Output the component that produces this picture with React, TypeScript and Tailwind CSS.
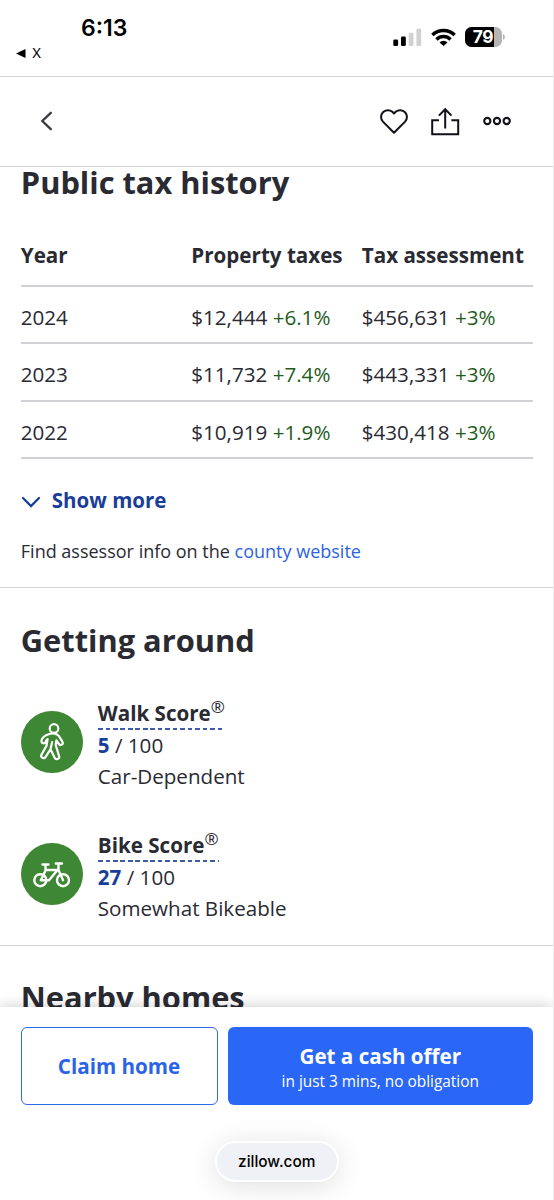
import React from "react";

const HISTORY = [
  { year: "2024", tax: "$12,444", taxUp: "+6.1%", value: "$456,631", valueUp: "+3%" },
  { year: "2023", tax: "$11,732", taxUp: "+7.4%", value: "$443,331", valueUp: "+3%" },
  { year: "2022", tax: "$10,919", taxUp: "+1.9%", value: "$430,418", valueUp: "+3%" },
];

function StatusBar() {
  return (
    <div className="flex h-[76px] shrink-0 justify-between pl-4 pr-[48px] font-['Inter',sans-serif] text-black">
      <div>
        <div className="mt-[13px] pl-[65px] text-[23px] font-semibold leading-[30px]">6:13</div>
        <div className="mt-[2px] flex items-center gap-[6px] text-[13.5px] leading-4">
          <svg width="10" height="9" viewBox="0 0 10 9"><path d="M0 4.5 9.5 0v9z" /></svg>
          <span>X</span>
        </div>
      </div>
      <div className="mt-[27px] flex h-5 items-center">
        <svg width="29" height="18" viewBox="0 0 29 18">
          <rect x="0.3" y="11.5" width="4.8" height="6.5" rx="1.3" />
          <rect x="8" y="8.5" width="4.8" height="9.5" rx="1.3" />
          <rect x="15.7" y="4.7" width="4.8" height="13.3" rx="1.3" fill="#d1d1d1" />
          <rect x="23.4" y="0.8" width="4.8" height="17.2" rx="1.3" fill="#d1d1d1" />
        </svg>
        <svg className="ml-[9px]" width="25" height="18" viewBox="0 0 25 18">
          <g fill="none" stroke="#000" strokeWidth="3.5">
            <path d="M1.4 7a15.7 15.7 0 0 1 22.2 0" />
            <path d="M5.5 11.5a9.9 9.9 0 0 1 14 0" />
          </g>
          <path d="M12.5 18 8.5 14.5a5.7 5.7 0 0 1 8 0z" />
        </svg>
        <div className="ml-[9px] flex h-5 w-[37px] items-center overflow-hidden rounded-[6.5px] bg-[#b5b5b5]">
          <div className="flex h-full w-[29px] items-center justify-end bg-black pr-px text-[17.5px] font-bold tracking-[-0.5px] text-white">79</div>
        </div>
        <svg className="ml-[1px]" width="2" height="6" viewBox="0 0 2 6"><path d="M0 0q2 1 2 3t-2 3z" fill="#b5b5b5" /></svg>
      </div>
    </div>
  );
}

function Header() {
  return (
    <header className="relative z-10 flex h-[91px] shrink-0 items-center border-y-[1.5px] border-[#d1d1d5] bg-white pb-px pl-10 pr-[42px]">
      <svg width="13" height="20" viewBox="0 0 13 20" fill="none" stroke="#3b3b42" strokeWidth="2.3" strokeLinecap="round"><path d="M10.8 1.8 2.3 10l8.5 8.2" /></svg>
      <svg className="ml-auto" width="28" height="26" viewBox="0 0 28 26" fill="none" stroke="#11111a" strokeWidth="2" strokeLinejoin="round">
        <path d="M14 24.7 2.9 13.6A6.8 6.8 0 0 1 12.3 3.8L14 5.5l1.7-1.7a6.8 6.8 0 0 1 9.4 9.8z" />
      </svg>
      <svg className="ml-[22px]" width="30" height="29" viewBox="0 0 30 29" fill="none" stroke="#11111a" strokeWidth="2">
        <path d="M9 13.3H2.2v14h26v-14h-6.8M15.2 21.5V2.2M8.9 8.6l6.3-6.4 6.3 6.4" />
      </svg>
      <svg className="ml-[23px]" width="28" height="10" viewBox="0 0 28 10" fill="none" stroke="#11111a" strokeWidth="2.1">
        <circle cx="4.3" cy="5" r="3.1" /><circle cx="14" cy="5" r="3.1" /><circle cx="23.7" cy="5" r="3.1" />
      </svg>
    </header>
  );
}

function WalkIcon() {
  return (
    <svg width="62" height="62" viewBox="0 0 62 62" fill="none" stroke="#fff" strokeWidth="2.2" strokeLinecap="round" strokeLinejoin="round">
      <circle cx="33" cy="17.5" r="4.3" />
      <path d="M27.5 23.3c-3.4 1.2-6.3 3.3-7 6.3-.6 2.8 3.3 3.8 4.1 1.1.3-1.3.9-1.9 2-2.6l-1.1 6.700-5 8.800c-1.500 2.900 2.500 5 4.200 2.300l4.800-7.800 4 8.400c1.400 3.100 5.600 1.500 4.500-1.600l-3.300-10.900.7-4.600 2.500 3.600c1.600 2.300 4.900.3 3.500-2.300l-3.500-5.500c-2-2.800-6.600-3.400-10.400-1.900zM29.500 38l1.700-7" />
    </svg>
  );
}

function BikeIcon() {
  return (
    <svg width="62" height="62" viewBox="0 0 62 62" fill="none" stroke="#fff" strokeWidth="2.4" strokeLinecap="round" strokeLinejoin="round">
      <circle cx="19.3" cy="37.2" r="6" /><circle cx="42" cy="37.2" r="6" />
      <path d="M21.5 21.5h6M24.5 21.5v6L19.800 37.200h8.200L36.500 27H24.500M34.800 20.500h6.200M37.500 20.500V27L42 37.200" />
    </svg>
  );
}

function Score({ icon, name, score, label }: { icon: React.ReactNode; name: string; score: string; label: string }) {
  return (
    <div className="flex h-[132px] items-start gap-[15px]">
      <div className="mt-[13px] size-[62px] shrink-0 rounded-full bg-[#3e8735]">{icon}</div>
      <div className="text-[20.6px] leading-[31px]">
        <div className="w-fit">
          <div className="flex h-[30px] font-bold">
            <span>{name}</span>
            <span className="-mt-[7px] text-[17px] font-normal">®</span>
          </div>
          <div className="h-[2px] bg-[repeating-linear-gradient(90deg,#3f5ba6_0_4.5px,transparent_4.5px_7.5px)]" />
        </div>
        <div><b className="text-[#1a3e98]">{score}</b> / 100</div>
        <div>{label}</div>
      </div>
    </div>
  );
}

export default function App() {
  return (
    <div className="flex h-[1200px] w-[554px] flex-col overflow-hidden border-r border-[#eeeeef] bg-white font-['Open_Sans',sans-serif] text-[#2a2a33]">
      <StatusBar />
      <Header />
      <main className="-mt-[6px] h-[846px] shrink-0 overflow-hidden">
        <section className="h-[426px] pl-[20.8px] pr-[20px]">
          <h2 className="text-[30.8px] font-bold leading-[42px]">Public tax history</h2>
          <div className="mt-[21px] grid h-[63px] grid-cols-[170.5px_170.5px_1fr] items-center border-b-2 border-[#d1d1d5] pt-[2px] text-[20.6px] font-bold">
            <div>Year</div>
            <div className="whitespace-nowrap">Property taxes</div>
            <div className="whitespace-nowrap">Tax assessment</div>
          </div>
          {HISTORY.map((r) => (
            <div key={r.year} className="grid h-[57.4px] grid-cols-[170.5px_170.5px_1fr] items-center border-b-2 border-[#d1d1d5] pt-[5.5px] text-[20.6px]">
              <div>{r.year}</div>
              <div className="whitespace-nowrap">{r.tax} <span className="text-[#1f5c1c]">{r.taxUp}</span></div>
              <div className="whitespace-nowrap">{r.value} <span className="text-[#1f5c1c]">{r.valueUp}</span></div>
            </div>
          ))}
          <div className="mt-[25px] flex items-center text-[20.5px] font-bold leading-[32px] text-[#1a3e98]">
            <svg className="mr-[11px] mt-[4px]" width="20" height="12" viewBox="0 0 20 12" fill="none" stroke="#1a3e98" strokeWidth="2.3" strokeLinecap="round"><path d="M2 2l8 8 8-8" /></svg>
            Show more
          </div>
          <p className="mt-[21px] text-[18px] leading-[28px]">Find assessor info on the <a className="text-[#2b63e3]">county website</a></p>
        </section>
        <section className="h-[358px] border-t-[1.5px] border-[#d1d1d5] px-[20.8px]">
          <h2 className="mb-[37.5px] mt-[30.5px] text-[30.8px] font-bold leading-[42px]">Getting around</h2>
          <Score icon={<WalkIcon />} name="Walk Score" score="5" label="Car-Dependent" />
          <Score icon={<BikeIcon />} name="Bike Score" score="27" label="Somewhat Bikeable" />
        </section>
        <section className="border-t-[1.5px] border-[#d1d1d5] px-[20.8px]">
          <h2 className="mt-[30px] text-[30.8px] font-bold leading-[42px]">Nearby homes</h2>
        </section>
      </main>
      <footer className="relative z-10 flex flex-1 flex-col items-center bg-white pl-[20.5px] pr-[20px] pt-5 shadow-[0_0_14px_rgba(0,0,0,0.22)]">
        <div className="flex h-[78px] w-full gap-[10px]">
          <button className="w-[197px] rounded-[6px] border-[1.5px] border-[#2f68e8] text-[20.6px] font-bold text-[#2b63e8]">Claim home</button>
          <button className="flex flex-1 flex-col items-center justify-center rounded-[6px] bg-[#2b67f6] pt-[3px] text-white">
            <span className="text-[20.6px] font-bold leading-[27px]">Get a cash offer</span>
            <span className="text-[15.4px] leading-[23px]">in just 3 mins, no obligation</span>
          </button>
        </div>
        <div className="mt-[36px] flex h-[41px] w-[124px] items-center justify-center rounded-full border-2 border-white bg-[#eff1f6] font-['Inter',sans-serif] text-[15.4px] font-medium text-black shadow-[0_4px_28px_rgba(0,0,0,0.13)]">zillow.com</div>
      </footer>
    </div>
  );
}
